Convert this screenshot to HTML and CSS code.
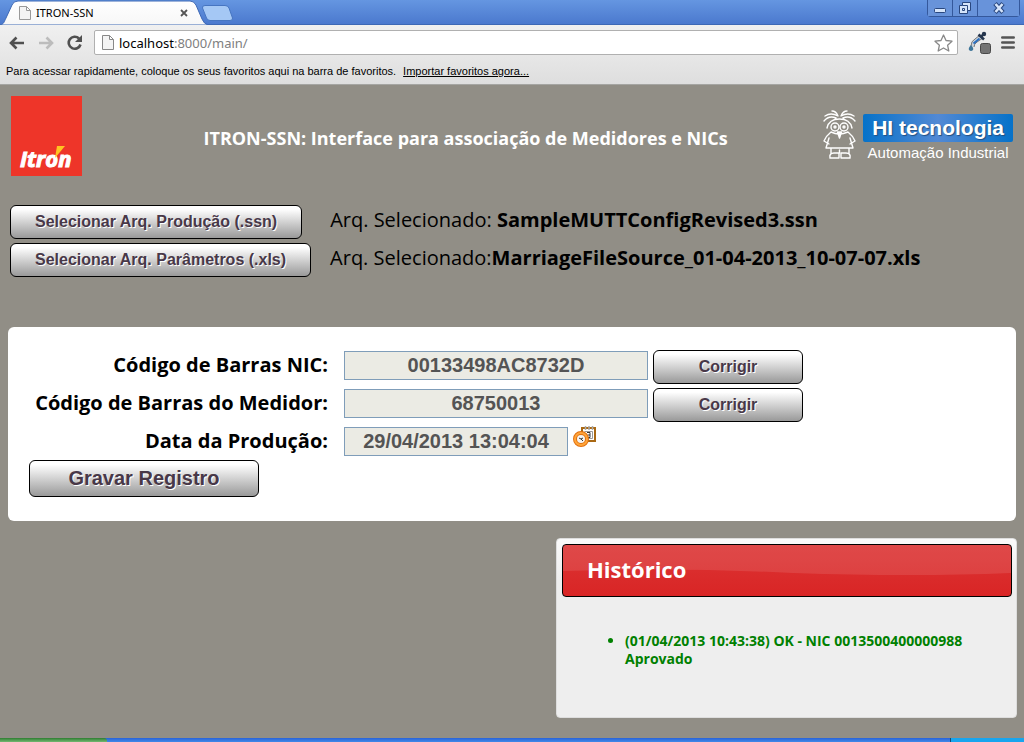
FILE: index.html
```html
<!DOCTYPE html>
<html lang="pt-BR">
<head>
<meta charset="utf-8">
<title>ITRON-SSN</title>
<link rel="stylesheet" href="styles.css">
</head>
<body>
<div class="browser">
  <div class="tabstrip">
    <div class="tab">
      <svg class="tab-shape" width="212" height="25" viewBox="0 0 212 25" aria-hidden="true">
        <defs><linearGradient id="tabfill" x2="0" y2="1"><stop offset="0" stop-color="#fff"/><stop offset="1" stop-color="#f7f7f7"/></linearGradient></defs>
        <path d="M0 25C4 24 4 22 6 18L12 5Q13.500 1 18 1H190Q194 1 196 5L202 19Q204 24 208 25Z" fill="url(#tabfill)" stroke="#3d68b5"/>
      </svg>
      <div class="tab-content">
        <svg width="12" height="14" viewBox="0 0 12 14" aria-hidden="true"><path d="M.5.500H7.500L11.500 4.500V13.500H.500ZM7.500.500V4.500H11.500" fill="#f4f4f4" stroke="#999"/></svg>
        <span class="tab-title">ITRON-SSN</span>
        <button class="plain" type="button" aria-label="Fechar guia"><svg width="8" height="8" viewBox="0 0 8 8"><path d="M1 1L7 7M7 1L1 7" stroke="#555" stroke-width="1.800"/></svg></button>
      </div>
    </div>
    <button class="plain new-tab" type="button" aria-label="Nova guia"><svg width="32" height="16" viewBox="0 0 32 16"><path d="M3 .500H23Q26 .500 27 3L30.500 13Q31 15.500 28 15.500H8Q5.500 15.500 4.500 13L.500 3Q0 .500 3 .500Z" fill="#a5c8f5" stroke="#4675c1"/></svg></button>
    <div class="window-buttons">
      <button type="button" aria-label="Minimizar"><svg width="14" height="14" viewBox="0 0 14 14"><rect x="1.500" y="7.500" width="11" height="4" rx="1" fill="#d5e4fa" stroke="#29477f"/></svg></button>
      <button type="button" aria-label="Restaurar"><svg width="14" height="14" viewBox="0 0 14 14"><path d="M4.500 1.500H12.500V9.500H9.500V12.500H1.500V4.500H4.500Z" fill="#d5e4fa" stroke="#29477f"/><path d="M4.500 4.500H9.500V9.500M4.500 7.500H6.500V9.500H4.500Z" fill="none" stroke="#29477f"/></svg></button>
      <button type="button" class="close" aria-label="Fechar"><svg width="14" height="14" viewBox="0 0 14 14"><path d="M3 2.500L11 11.500M11 2.500L3 11.500" stroke="#29477f" stroke-width="4.600"/><path d="M3.500 3L10.500 11M10.500 3L3.500 11" stroke="#d5e4fa" stroke-width="2.600"/></svg></button>
    </div>
  </div>
  <div class="toolbar">
    <button class="plain" type="button" aria-label="Voltar"><svg width="16" height="14" viewBox="0 0 16 14"><path d="M7.500 1.500L2 7L7.500 12.500M2 7H15" fill="none" stroke="#505050" stroke-width="2.600"/></svg></button>
    <button class="plain" type="button" aria-label="Avançar"><svg width="16" height="14" viewBox="0 0 16 14"><path d="M8.500 1.500L14 7L8.500 12.500M14 7H1" fill="none" stroke="#bcbcbc" stroke-width="2.600"/></svg></button>
    <button class="plain reload" type="button" aria-label="Recarregar"><svg width="16" height="16" viewBox="0 0 16 16"><path d="M13.500 9.500A6 6 0 1 1 12 3.500" fill="none" stroke="#505050" stroke-width="2.600"/><path d="M15 0V7H8Z" fill="#505050"/></svg></button>
    <div class="address">
      <svg width="12" height="15" viewBox="0 0 12 15" aria-hidden="true"><path d="M.5.500H7.500L11.500 4.500V14.500H.500ZM7.500.500V4.500H11.500" fill="#f4f4f4" stroke="#888"/></svg>
      <span class="url"><span class="host">localhost</span>:8000/main/</span>
      <svg width="19" height="18" viewBox="0 0 19 18" aria-hidden="true"><path d="M9.500 1L12 6.500L18 7.200L13.600 11.200L14.800 17L9.500 14L4.200 17L5.400 11.200L1 7.200L7 6.500Z" fill="#fff" stroke="#888" stroke-width="1.300" stroke-linejoin="round"/></svg>
    </div>
    <button class="plain" type="button" aria-label="Conta-gotas"><svg width="24" height="24" viewBox="0 0 24 24"><path d="M3 15Q3 10 7 8L12 4L15 7L9 11Q6 13 6 16" fill="#c9d3dd" stroke="#777"/><path d="M5.500 12.500L11.500 7.500" stroke="#2b6fc0" stroke-width="2"/><path d="M10.500 3.500L16 8.500M13 6L16 2.500" stroke="#26364d" stroke-width="2.600"/><circle cx="16" cy="3" r="2.200" fill="#26364d"/><path d="M3 14Q6 17 5 19Q3 21 1 19Q0 17 3 14Z" fill="#3e7599"/><rect x="12.500" y="12.500" width="10" height="10" rx="2" fill="#737373" stroke="#484848"/></svg></button>
    <button class="plain menu" type="button" aria-label="Menu"><svg width="14" height="13" viewBox="0 0 14 13"><path d="M1.300 1.500H12.700M1.300 6.500H12.700M1.300 11.500H12.700" stroke="#555" stroke-width="2.600" stroke-linecap="round"/></svg></button>
  </div>
  <div class="bookmarks"><span>Para acessar rapidamente, coloque os seus favoritos aqui na barra de favoritos.</span><a href="#">Importar favoritos agora...</a></div>
</div>

<main class="page">
  <header class="header">
    <svg class="itron" width="71" height="80" viewBox="0 0 71 80" role="img" aria-label="Itron">
      <rect width="71" height="80" fill="#ee3529"/>
      <text class="itron-name" x="9" y="71">Itron</text>
      <path d="M46 50H54L44 62Z" fill="#ffc422"/>
    </svg>
    <h1>ITRON-SSN: Interface para associação de Medidores e NICs</h1>
    <div class="hi">
      <svg width="34" height="50" viewBox="0 0 34 50" aria-hidden="true">
        <g fill="none" stroke="#fff" stroke-width="1.400" stroke-linecap="round" stroke-linejoin="round">
          <path d="M2 6Q8 2 15 6Q13 1 9 1M31 6Q25 2 18 6Q20 1 24 1M1 11Q6 5 13 8M32 11Q27 5 20 8M4 18Q6 9 16.500 9Q27 9 29 18"/>
          <circle cx="12" cy="17" r="4"/><circle cx="21" cy="17" r="4"/><circle cx="12" cy="17" r="1"/><circle cx="21" cy="17" r="1"/>
          <path d="M8 22Q16 26 25 22M8 22Q3 26 1 31L6 34M25 22Q30 26 32 31L27 34M6 28L3 38H30L27 28M8 38V43M26 38V43M16.500 40V43M7 48Q6 43 11 43H16V48ZM18 48V43H23Q28 43 27 48Z"/>
          <path d="M14.500 22L16.500 28L18.500 22Z" fill="#fff"/>
        </g>
      </svg>
      <div class="hi-text"><strong>HI tecnologia</strong><span>Automação Industrial</span></div>
    </div>
  </header>

  <section class="files">
    <div class="file-row"><button class="btn" type="button">Selecionar Arq. Produção (.ssn)</button><p class="first-file">Arq. Selecionado: <b>SampleMUTTConfigRevised3.ssn</b></p></div>
    <div class="file-row"><button class="btn" type="button">Selecionar Arq. Parâmetros (.xls)</button><p>Arq. Selecionado:<b>MarriageFileSource_01-04-2013_10-07-07.xls</b></p></div>
  </section>

  <form class="card">
    <div class="field"><label for="nic">Código de Barras NIC:</label><input id="nic" type="text" value="00133498AC8732D" readonly><button class="btn fix" type="button">Corrigir</button></div>
    <div class="field"><label for="meter">Código de Barras do Medidor:</label><input id="meter" type="text" value="68750013" readonly><button class="btn fix" type="button">Corrigir</button></div>
    <div class="field"><label for="date">Data da Produção:</label><input class="date" id="date" type="text" value="29/04/2013 13:04:04" readonly>
      <button class="plain picker" type="button" aria-label="Escolher data"><svg width="24" height="22" viewBox="0 0 24 22"><rect x="9" y="2" width="13" height="13" fill="#fff" stroke="#a96813" stroke-width="2"/><path d="M11.500 5.500H19.500V12.500H12" fill="none" stroke="#999"/><path d="M12.500 0V4M16 0V4M19.500 0V4" stroke="#aaa" stroke-width="1.500"/><path d="M14 6.500H17V11.500H14M14.500 9H17" fill="none" stroke="#333"/><circle cx="8" cy="13" r="6" fill="#f4f4f2" stroke="#e2700f" stroke-width="4"/><circle cx="8" cy="13" r="6" fill="none" stroke="#ffa53a" stroke-width="2"/><path d="M6 12L8 13L10 12M8 13L10 15" fill="none" stroke="#333"/></svg></button>
    </div>
    <button class="btn save" type="button">Gravar Registro</button>
  </form>

  <section class="history">
    <div class="history-head">
      <svg class="wave" viewBox="0 0 448 51" preserveAspectRatio="none" aria-hidden="true"><path d="M0 0H448V28Q350 32 230 28Q110 22 0 26Z" fill="#fff" fill-opacity=".1"/></svg>
      <h2>Histórico</h2>
    </div>
    <ul><li>(01/04/2013 10:43:38) OK - NIC 0013500400000988 Aprovado</li></ul>
  </section>
</main>
<footer class="taskbar"><div class="start"></div><div class="tray"></div></footer>
</body>
</html>
```
FILE: styles.css
```css
* { box-sizing: border-box; }

body {
  margin: 0;
  min-height: 100vh;
  display: flex;
  flex-direction: column;
  background: #918e86;
  font-family: "Open Sans", "Noto Sans", sans-serif;
  color: #000;
}

h1, h2, p, ul { margin: 0; }
svg { display: block; flex: none; }
.plain { padding: 0; border: 0; background: none; }

.browser {
  background: linear-gradient(#f8f8f8, #dedede);
  border-bottom: 1px solid #a5a5a2;
}
.tabstrip {
  height: 25px;
  display: flex;
  align-items: flex-start;
  background: linear-gradient(#6596e1, #4b79ce);
  border-bottom: 1px solid #3d68b5;
}
.tab { display: grid; }
.tab > * { grid-area: 1 / 1; }
.tab-content {
  display: flex;
  align-items: center;
  gap: 5px;
  padding: 0 24px 0 19px;
}
.tab-title { flex: 1; font-family: "Noto Sans", sans-serif; font-size: 11px; }
.new-tab { margin: 5px 0 0 -10px; }
.window-buttons {
  display: flex;
  margin: 0 4px 0 auto;
  border: 1px solid #34589c;
  border-top: 0;
  border-radius: 0 0 4px 4px;
}
.window-buttons button {
  width: 25px;
  height: 16px;
  padding: 0;
  display: grid;
  place-items: center;
  border: 0;
  border-right: 1px solid #34589c;
  background: #6893da;
}
.window-buttons .close { width: 41px; border-right: 0; }

.toolbar {
  display: flex;
  align-items: center;
  gap: 13px;
  height: 35px;
  padding: 0 9px;
}
.reload { margin-right: -2px; }
.address {
  flex: 1;
  height: 25px;
  display: flex;
  align-items: center;
  gap: 5px;
  padding: 0 4px 0 7px;
  margin-right: -3px;
  background: #fff;
  border: 1px solid #b0b0b0;
  border-radius: 2px;
}
.url { flex: 1; font-family: "Noto Sans", sans-serif; font-size: 13px; color: #808080; }
.host { color: #000; }
.menu { margin-left: -4px; }
.bookmarks {
  display: flex;
  gap: 7px;
  height: 24px;
  padding-left: 6px;
  font-family: "Liberation Sans", Arial, sans-serif;
  font-size: 11px;
  line-height: 22px;
}
.bookmarks a { color: inherit; }

.page { flex: 1; padding: 11px 8px 20px; }

.header {
  display: flex;
  justify-content: space-between;
  padding: 0 3px;
}
.itron-name {
  font: italic bold 22px "Open Sans", sans-serif;
  fill: #fff;
  stroke: #fff;
}
.header h1 {
  padding: 30px 0 0 26px;
  color: #fff;
  font-size: 18px;
  line-height: 24px;
}
.hi { display: flex; gap: 6px; padding-top: 14px; }
.hi-text {
  padding-top: 4px;
  color: #fff;
  font-family: "Liberation Sans", Arial, sans-serif;
  text-align: center;
}
.hi-text strong {
  display: block;
  padding: 0 9px;
  border-radius: 2px;
  background: linear-gradient(90deg, #0672c9, #5289d4 50%, #0672c9);
  font-size: 21px;
  line-height: 28px;
  text-shadow: 1px 1px 1px #234f80;
}
.hi-text span { font-size: 15px; line-height: 22px; }

.files {
  display: grid;
  gap: 4px;
  padding: 29px 2px 50px;
}
.file-row { display: flex; align-items: center; gap: 19px; font-size: 20px; line-height: 28px; }
.first-file { margin-left: 9px; }
.file-row p { padding-bottom: 4px; }

.btn {
  height: 34px;
  padding: 0 24px;
  border: 1px solid #000;
  border-radius: 6px;
  background: linear-gradient(#fff 10%, #999);
  color: #483848;
  font: bold 16px "Liberation Sans", Arial, sans-serif;
  text-shadow: 1px 1px 0 #fff;
  white-space: nowrap;
}

.card {
  padding: 23px 21px 24px;
  border-radius: 6px;
  background: #fff;
}
.field { display: flex; min-height: 34px; }
.field + .field { margin-top: 4px; }
.field label {
  width: 299px;
  margin-right: 16px;
  text-align: right;
  font-size: 20px;
  font-weight: bold;
  line-height: 30px;
}
.field input {
  width: 304px;
  height: 29px;
  margin: 1px 5px 0 0;
  padding: 0;
  border: 1px solid #7f9db9;
  background: #ebebe4;
  color: #545454;
  text-align: center;
  font: bold 20px "Liberation Sans", Arial, sans-serif;
}
.field .date { width: 224px; }
.fix { width: 150px; }
.picker { align-self: flex-start; }
.save { width: 230px; height: 37px; font-size: 20px; display: block; }

.history {
  width: 461px;
  min-height: 180px;
  margin: 17px -1px 0 auto;
  padding: 5px 4px 5px 5px;
  border: 1px solid #ddd;
  border-radius: 4px;
  background: linear-gradient(#fafafa, #eee 40px);
}
.history-head {
  display: grid;
  height: 53px;
  border: 1px solid #000;
  border-radius: 4px;
  background: linear-gradient(#dc3535, #d92525);
  overflow: hidden;
}
.history-head > * { grid-area: 1 / 1; }
.wave { width: 100%; height: 51px; }
.history h2 {
  padding-left: 24px;
  color: #fff;
  font-size: 22px;
  line-height: 48px;
}
.history ul {
  padding: 35px 40px 0 63px;
  color: #008000;
  font-size: 14px;
  font-weight: bold;
  line-height: 18px;
}

.taskbar {
  height: 4px;
  display: flex;
  justify-content: space-between;
  background: linear-gradient(#2862d8, #418ae8);
}
.start { width: 107px; border-radius: 0 3px 0 0; background: linear-gradient(#2f7d32, #74b872); }
.tray { width: 74px; border-left: 1px solid #0c4a78; background: #18a5ee; }
```
